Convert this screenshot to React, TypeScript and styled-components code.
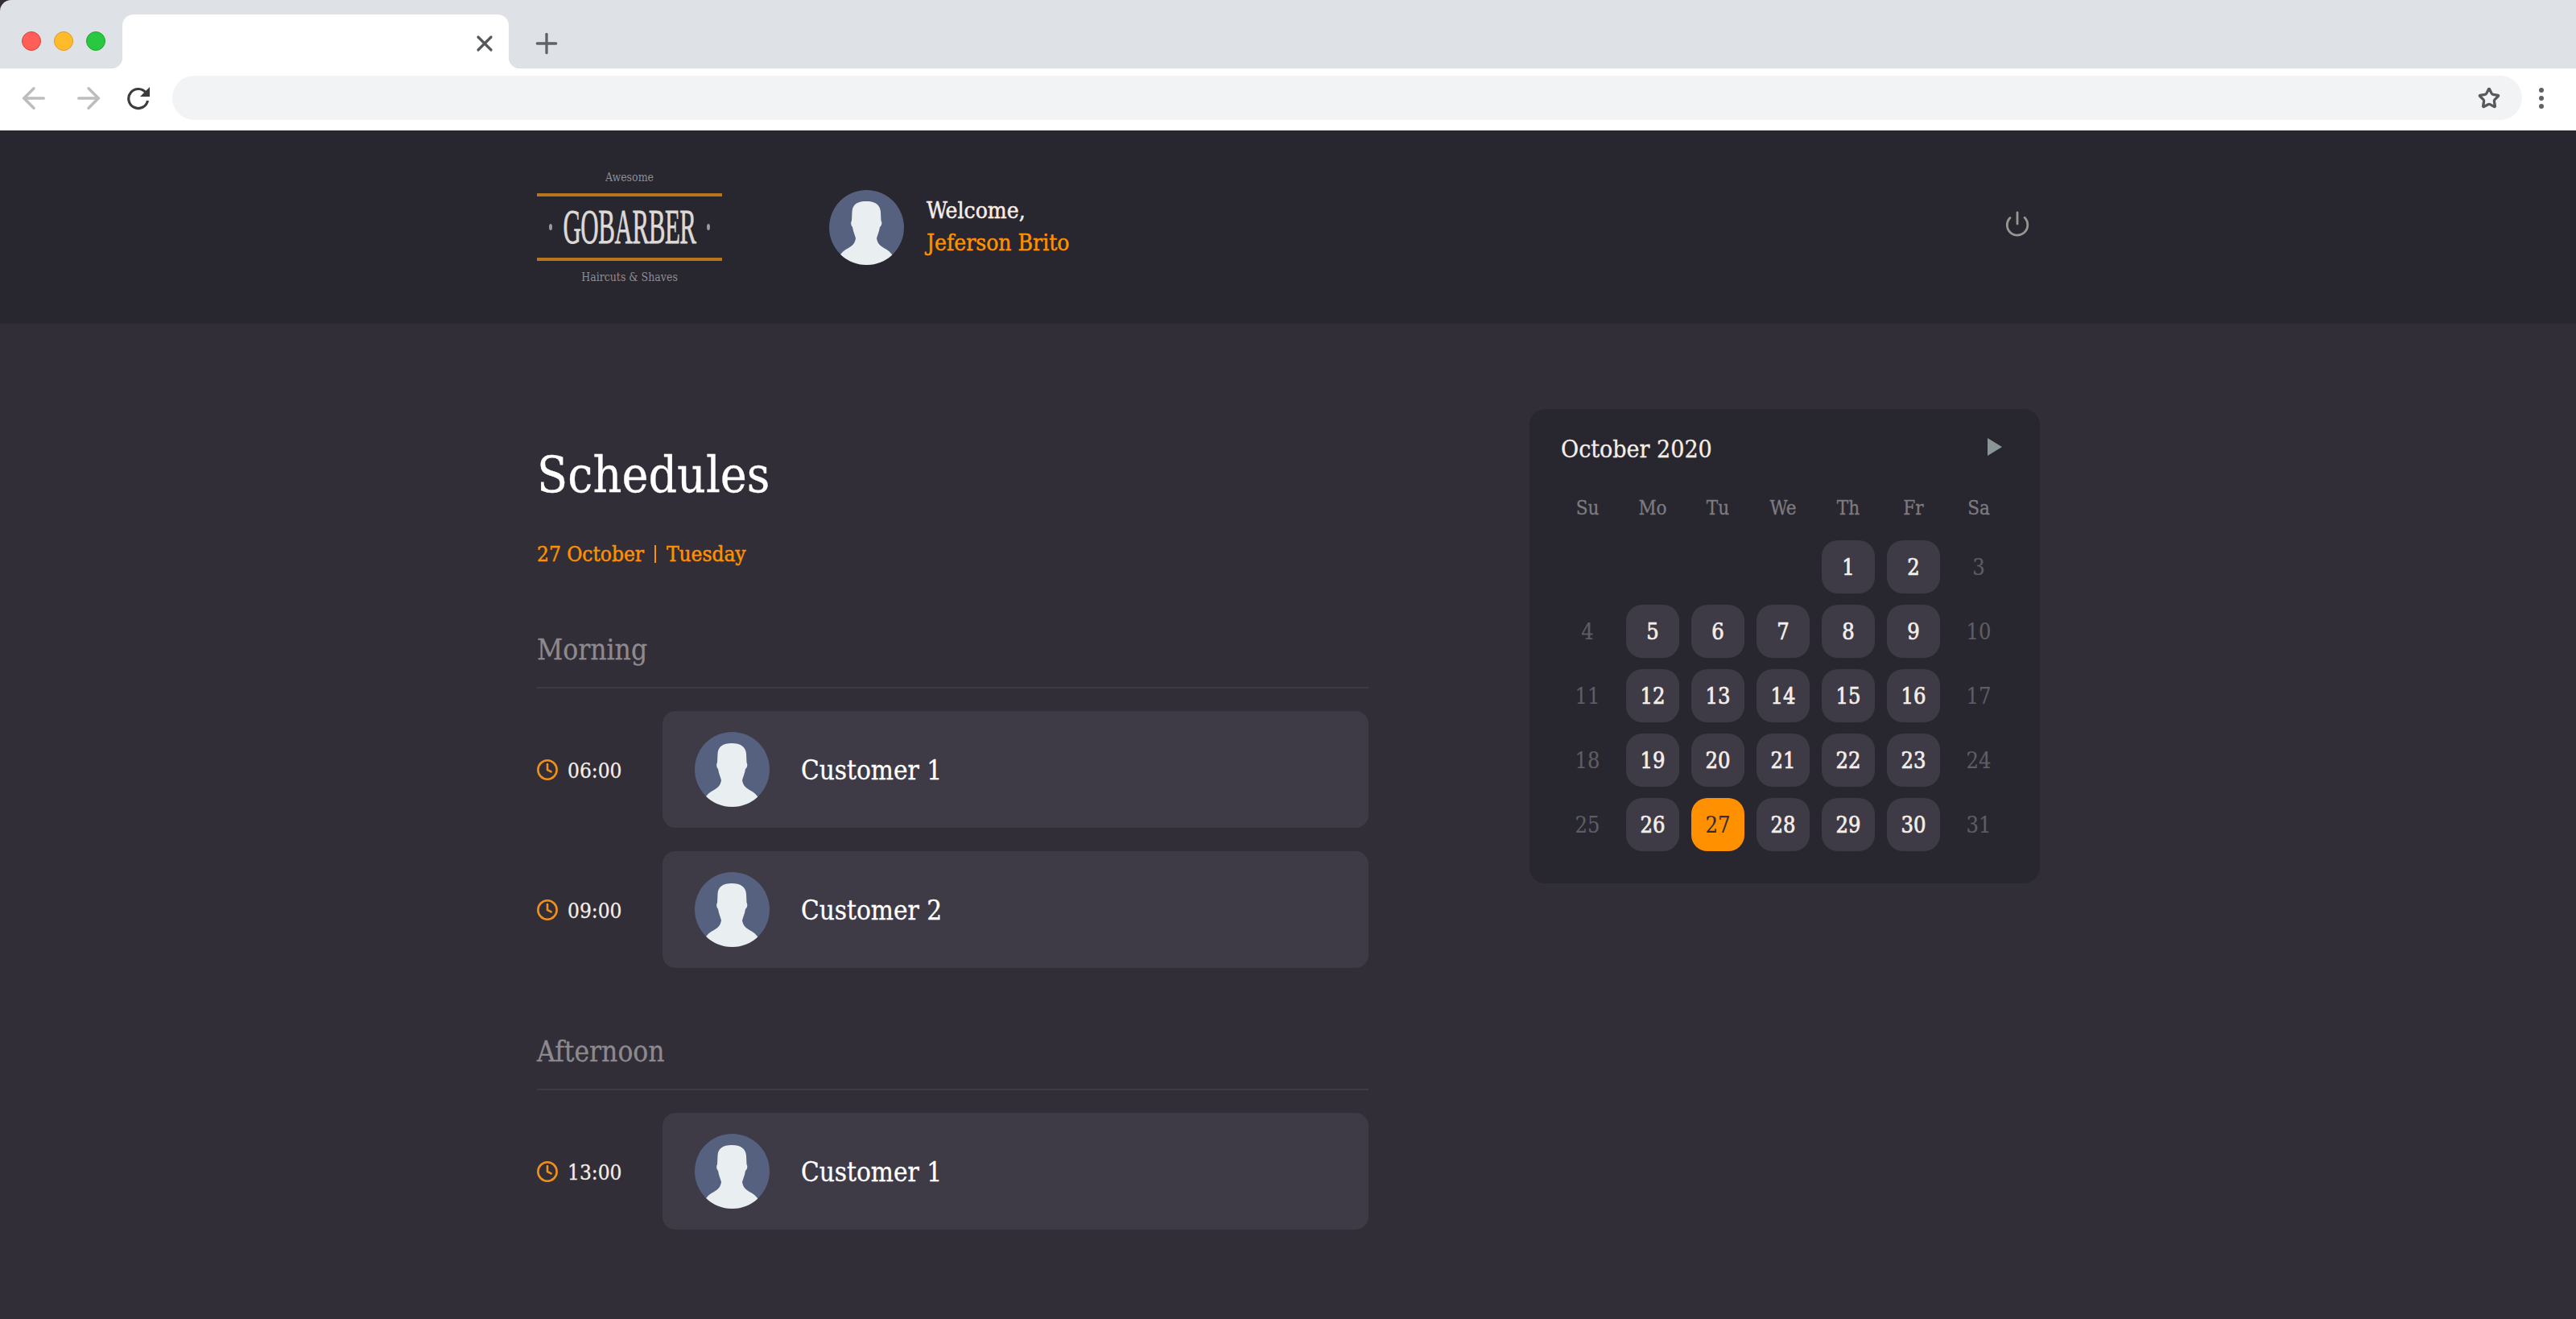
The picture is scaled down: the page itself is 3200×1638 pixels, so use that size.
import React from "react";
import styled, { createGlobalStyle } from "styled-components";
import { ArrowLeft, ArrowRight, Clock, Plus, Power, Star, X } from "lucide-react";

const serif = `"DejaVu Serif", "Liberation Serif", serif`;

const GlobalStyle = createGlobalStyle`
  html, body {
    margin: 0;
    padding: 0;
    background: #fff;
  }
  * {
    box-sizing: border-box;
  }
`;

const morning = [
  { time: "06:00", name: "Customer 1" },
  { time: "09:00", name: "Customer 2" },
];
const afternoon = [{ time: "13:00", name: "Customer 1" }];
const weekdays = ["Su", "Mo", "Tu", "We", "Th", "Fr", "Sa"];

const Avatar = ({ size }: { size: number }) => (
  <AvatarSvg width={size} height={size} viewBox="0 0 93 93">
    <rect width="93" height="93" fill="#55617f" />
    <path
      fill="#e9eef0"
      d="M46 14C57 14 63 18 64 27L64.500 38C66 40 65.500 44 63 46C62 52 60 56 59 60C60 66 63 69 68 72C73 74 77 78 81 84L81 93L11 93L11 84C15 78 19 74 24 72C29 69 32 66 33 60C32 56 30 52 29 46C27 44 26.500 40 28 38L28.500 27C29 18 35 14 46 14Z"
    />
  </AvatarSvg>
);

const Appointment = ({ time, name }: { time: string; name: string }) => (
  <Row>
    <TimeCell>
      <Clock size={28} strokeWidth={2.2} color="#f0901a" />
      <span>{time}</span>
    </TimeCell>
    <CustomerCard>
      <Avatar size={93} />
      <CustomerName>{name}</CustomerName>
    </CustomerCard>
  </Row>
);

export default function App() {
  const cells: (number | null)[] = [null, null, null, null];
  for (let d = 1; d <= 31; d++) cells.push(d);

  return (
    <Page>
      <GlobalStyle />
      <TabStrip>
        <Lights>
          <Light color="#ff5f57" edge="#d9443e" />
          <Light color="#ffbb2c" edge="#dc9b22" />
          <Light color="#28c840" edge="#1fa32f" />
        </Lights>
        <Tab>
          <X size={32} strokeWidth={2.4} color="#55585c" />
        </Tab>
        <NewTab>
          <Plus size={40} strokeWidth={2} color="#5f6368" />
        </NewTab>
      </TabStrip>
      <Toolbar>
        <ArrowLeft size={42} strokeWidth={2} color="#bdbdbd" />
        <ArrowRight size={42} strokeWidth={2} color="#bdbdbd" />
        <svg width="30" height="30" viewBox="0 0 30 30" fill="none">
          <path d="M24.500 8.500A12 12 0 1 0 26.500 18" stroke="#3c3c3c" strokeWidth="3.200" />
          <path d="M29 1V13H17Z" fill="#3c3c3c" />
        </svg>
        <AddressBar>
          <Star size={28} strokeWidth={2.800} color="#55585c" />
        </AddressBar>
        <MenuDots>
          <i />
          <i />
          <i />
        </MenuDots>
      </Toolbar>

      <Header>
        <HeaderInner>
          <Logo>
            <LogoSmall>Awesome</LogoSmall>
            <LogoBand>
              <LogoDot />
              <LogoWord>GOBARBER</LogoWord>
              <LogoDot />
            </LogoBand>
            <LogoSmall>Haircuts &amp; Shaves</LogoSmall>
          </Logo>
          <Profile>
            <Avatar size={93} />
            <ProfileText>
              <span>Welcome,</span>
              <strong>Jeferson Brito</strong>
            </ProfileText>
          </Profile>
          <PowerButton>
            <Power size={34} strokeWidth={2} color="#999591" />
          </PowerButton>
        </HeaderInner>
      </Header>

      <Content>
        <Schedule>
          <Title>Schedules</Title>
          <DateLine>
            27 October<Sep />Tuesday
          </DateLine>
          <Section>
            <SectionTitle>Morning</SectionTitle>
            {morning.map((a) => (
              <Appointment key={a.time} {...a} />
            ))}
          </Section>
          <Section>
            <SectionTitle>Afternoon</SectionTitle>
            {afternoon.map((a) => (
              <Appointment key={a.time} {...a} />
            ))}
          </Section>
        </Schedule>

        <Calendar>
          <CalendarHead>
            <MonthName>October 2020</MonthName>
            <svg width="18" height="22" viewBox="0 0 18 22">
              <path d="M0 0L18 11L0 22Z" fill="#8a9696" />
            </svg>
          </CalendarHead>
          <DayGrid>
            {weekdays.map((w) => (
              <Weekday key={w}>{w}</Weekday>
            ))}
            {cells.map((d, i) => {
              if (d === null) return <DayCell key={`e${i}`} />;
              const weekend = i % 7 === 0 || i % 7 === 6;
              return (
                <DayCell key={d} $kind={weekend ? "off" : d === 27 ? "selected" : "open"}>
                  {d}
                </DayCell>
              );
            })}
          </DayGrid>
        </Calendar>
      </Content>
    </Page>
  );
}

const Page = styled.div`
  width: 3200px;
  height: 1638px;
  overflow: hidden;
  display: flex;
  flex-direction: column;
  background: #312e38;
  font-family: ${serif};
  font-stretch: condensed;
  -webkit-text-stroke: 0.3px;
`;

const TabStrip = styled.div`
  height: 85px;
  display: flex;
  background: #dee1e6;
  border-top-left-radius: 14px;
  flex-shrink: 0;
`;

const Lights = styled.div`
  width: 152px;
  display: flex;
  gap: 16px;
  padding: 39px 0 0 27px;
`;

const Light = styled.span<{ color: string; edge: string }>`
  width: 24px;
  height: 24px;
  border-radius: 50%;
  background: ${(p) => p.color};
  border: 1px solid ${(p) => p.edge};
`;

const Tab = styled.div`
  position: relative;
  width: 480px;
  height: 67px;
  margin-top: 18px;
  padding: 5px 14px 0 0;
  display: flex;
  align-items: center;
  justify-content: flex-end;
  background: #fff;
  border-radius: 14px 14px 0 0;

  &::before,
  &::after {
    content: "";
    position: absolute;
    bottom: 0;
    width: 14px;
    height: 14px;
    background: radial-gradient(circle at var(--c) 0, #dee1e6 14px, #fff 14.500px);
  }
  &::before {
    --c: 0;
    left: -14px;
  }
  &::after {
    --c: 100%;
    right: -14px;
  }
`;

const NewTab = styled.div`
  height: 67px;
  margin: 18px 0 0 27px;
  padding-top: 5px;
  display: flex;
  align-items: center;
`;

const Toolbar = styled.div`
  height: 77px;
  padding: 0 0 4px 21px;
  display: flex;
  align-items: center;
  gap: 26px;
  background: #fff;
  flex-shrink: 0;
`;

const AddressBar = styled.div`
  width: 2919px;
  height: 55px;
  margin-left: 1px;
  padding-right: 27px;
  display: flex;
  align-items: center;
  justify-content: flex-end;
  background: #f1f3f4;
  border-radius: 28px;
`;

const MenuDots = styled.div`
  margin-left: -5px;
  display: flex;
  flex-direction: column;
  gap: 4px;

  i {
    width: 6px;
    height: 6px;
    border-radius: 50%;
    background: #5f6368;
  }
`;

const Header = styled.header`
  height: 240px;
  background: #28262e;
  flex-shrink: 0;
`;

const HeaderInner = styled.div`
  width: 1866px;
  height: 100%;
  margin: 0 auto;
  display: flex;
  align-items: center;
`;

const Logo = styled.div`
  width: 230px;
  display: flex;
  flex-direction: column;
  align-items: center;
  gap: 12px;
`;

const LogoSmall = styled.span`
  font-size: 14px;
  line-height: 16px;
  color: #8f8d92;
  -webkit-text-stroke: 0;
`;

const LogoBand = styled.div`
  width: 100%;
  height: 84px;
  display: flex;
  align-items: center;
  justify-content: space-between;
  padding: 0 15px;
  border-top: 4px solid #b8741f;
  border-bottom: 4px solid #b8741f;
`;

const LogoDot = styled.span`
  width: 8px;
  height: 8px;
  border-radius: 50%;
  background: #9a9a9a;
`;

const LogoWord = styled.span`
  font-family: "Liberation Serif", serif;
  font-stretch: normal;
  font-size: 36px;
  line-height: 36px;
  letter-spacing: -0.500px;
  color: #dcd9d6;
  display: inline-block;
  transform: scale(0.86, 1.68);
  -webkit-text-stroke: 0.5px;
`;

const Profile = styled.div`
  margin-left: 133px;
  display: flex;
  align-items: center;
  gap: 28px;
`;

const AvatarSvg = styled.svg`
  border-radius: 50%;
  flex-shrink: 0;
`;

const ProfileText = styled.div`
  display: flex;
  flex-direction: column;
  font-size: 28px;
  line-height: 40px;
  color: #f4ede8;
  -webkit-text-stroke: 0.5px;

  strong {
    font-weight: 400;
    color: #ff9000;
  }
`;

const PowerButton = styled.div`
  margin: 0 10px 8px auto;
  display: flex;
`;

const Content = styled.main`
  width: 1868px;
  margin: 0 auto;
  padding: 106px 0 0 1px;
  display: flex;
  justify-content: space-between;
  align-items: flex-start;
`;

const Schedule = styled.div`
  width: 1033px;
  display: flex;
  flex-direction: column;
`;

const Title = styled.h1`
  margin: 42px 0 0;
  font-size: 62px;
  line-height: 80px;
  font-weight: 400;
  color: #fff;
`;

const DateLine = styled.p`
  margin: 38px 0 0;
  display: flex;
  align-items: center;
  font-size: 26px;
  line-height: 40px;
  color: #ff9000;
  -webkit-text-stroke: 0.5px;
`;

const Sep = styled.span`
  width: 2px;
  height: 22px;
  margin: 0 13px;
  background: #ff9000;
`;

const Section = styled.section`
  margin-top: 75px;
  display: flex;
  flex-direction: column;
  gap: 28px;

  & + & {
    margin-top: 80px;
  }
`;

const SectionTitle = styled.h2`
  margin: 0;
  padding-bottom: 22px;
  font-size: 35px;
  line-height: 48px;
  font-weight: 400;
  color: #8d8a8f;
  border-bottom: 2px solid #3e3b47;
`;

const Row = styled.div`
  display: flex;
  align-items: center;

  & + & {
    margin-top: 1px;
  }
`;

const TimeCell = styled.div`
  width: 156px;
  display: flex;
  align-items: center;
  gap: 11px;
  font-size: 26px;
  color: #f4ede8;

  svg {
    margin-left: -1px;
  }
  span {
    padding-top: 2px;
  }
`;

const CustomerCard = styled.div`
  flex: 1;
  height: 145px;
  padding-left: 40px;
  display: flex;
  align-items: center;
  gap: 39px;
  background: #3e3b47;
  border-radius: 16px;
`;

const CustomerName = styled.span`
  padding-top: 2px;
  font-size: 33px;
  color: #fff;
`;

const Calendar = styled.aside`
  width: 634px;
  height: 589px;
  padding: 30px 39px 0;
  background: #28262e;
  border-radius: 20px;
`;

const CalendarHead = styled.div`
  height: 38px;
  padding-right: 8px;
  display: flex;
  align-items: center;
  justify-content: space-between;

  svg {
    margin-bottom: 4px;
  }
`;

const MonthName = styled.span`
  font-size: 30px;
  color: #f4ede8;
`;

const DayGrid = styled.div`
  margin-top: 15px;
  display: grid;
  grid-template-columns: repeat(7, 66px);
  grid-auto-rows: 66px;
  column-gap: 15px;
  row-gap: 14px;
`;

const Weekday = styled.span`
  height: 52px;
  margin-bottom: -14px;
  padding-top: 28px;
  display: flex;
  align-items: center;
  justify-content: center;
  font-size: 24px;
  color: #7d7b80;
`;

const dayColors = { off: "#5f5d63", open: "#f4ede8", selected: "#312e38" };

const DayCell = styled.span<{ $kind?: "off" | "open" | "selected" }>`
  display: flex;
  align-items: center;
  justify-content: center;
  font-size: 27px;
  border-radius: 20px;
  color: ${(p) => (p.$kind ? dayColors[p.$kind] : "transparent")};
  -webkit-text-stroke: ${(p) => (p.$kind === "open" ? "0.7px" : "0.2px")};
  background: ${(p) =>
    p.$kind === "open" ? "#3e3b47" : p.$kind === "selected" ? "#ff9000" : "transparent"};
`;
